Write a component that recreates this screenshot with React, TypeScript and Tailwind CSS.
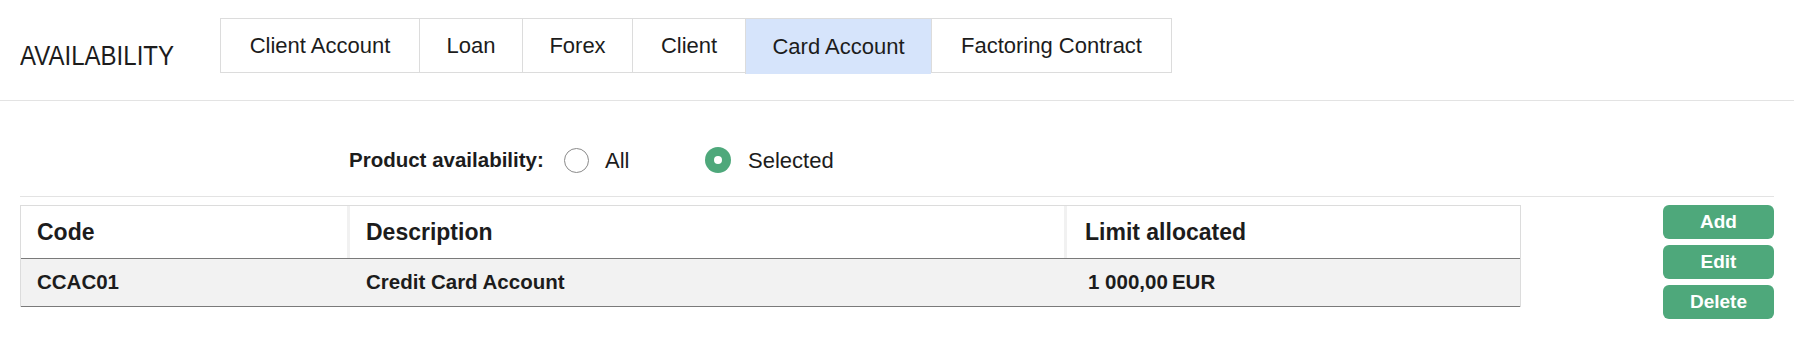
import { useState } from "react";

const tabs = [
  { label: "Client Account", w: "w-[198px]" },
  { label: "Loan", w: "w-[103px]" },
  { label: "Forex", w: "w-[110px]" },
  { label: "Client", w: "w-[113px]" },
  { label: "Card Account", w: "w-[186px]" },
  { label: "Factoring Contract", w: "w-[240px]" },
];

const rows = [
  { code: "CCAC01", description: "Credit Card Account", limit: "1 000,00\u202FEUR" },
];

function Radio({ checked }: { checked: boolean }) {
  if (checked) {
    return (
      <span className="flex h-[26px] w-[26px] items-center justify-center rounded-full bg-[#4ea87b]">
        <span className="h-[8px] w-[8px] rounded-full bg-white" />
      </span>
    );
  }
  return <span className="h-[25px] w-[25px] rounded-full border border-[#8a8a8a] bg-white" />;
}

export default function App() {
  const [activeTab, setActiveTab] = useState("Card Account");
  const [availability, setAvailability] = useState("selected");

  return (
    <div className="h-[337px] w-[1794px] overflow-hidden bg-white font-['Liberation_Sans',Arial,sans-serif] text-[#1c1c1c]">
      {/* top bar */}
      <div className="flex h-[101px] border-b border-[#e3e3e3] pl-[20px] pt-[18px]">
        <div className="mt-[25px] w-[200px]">
          <h1 className="inline-block origin-left scale-x-[0.89] text-[27px] leading-none font-normal">
            AVAILABILITY
          </h1>
        </div>
        <div className="flex h-[55px] border border-[#dcdcdc]">
          {tabs.map((tab, i) => (
            <button
              key={tab.label}
              onClick={() => setActiveTab(tab.label)}
              className={`${tab.w} flex items-center justify-center text-[22px] ${
                i > 0 ? "border-l border-[#dcdcdc]" : ""
              } ${activeTab === tab.label ? "-mb-[2px] bg-[#d6e4fb]" : "bg-white"}`}
            >
              {tab.label}
            </button>
          ))}
        </div>
      </div>

      <div className="px-[20px]">
        {/* product availability */}
        <div className="flex border-b border-[#e3e3e3] pb-[23px] pl-[329px] pt-[46px]">
          <div className="flex h-[26px] items-center">
            <span className="w-[215px] text-[20.5px] font-bold">Product availability:</span>
            <label
              className="flex w-[141px] cursor-pointer items-center"
              onClick={() => setAvailability("all")}
            >
              <Radio checked={availability === "all"} />
              <span className="ml-[16px] text-[22px]">All</span>
            </label>
            <label
              className="flex cursor-pointer items-center"
              onClick={() => setAvailability("selected")}
            >
              <Radio checked={availability === "selected"} />
              <span className="ml-[17px] text-[22px]">Selected</span>
            </label>
          </div>
        </div>

        {/* table + actions */}
        <div className="mt-[8px] flex items-start justify-between">
          <div className="w-[1501px] border-x border-t border-[#dcdcdc]">
            <div className="flex h-[53px] border-b border-[#7a7a7a] text-[23px] font-bold">
              <div className="flex w-[329px] items-center border-r-[3px] border-[#f1f1f1] pl-[16px]">Code</div>
              <div className="flex w-[717px] items-center border-r-[3px] border-[#f1f1f1] pl-[16px]">Description</div>
              <div className="flex flex-1 items-center pl-[18px]">Limit allocated</div>
            </div>
            {rows.map((row) => (
              <div
                key={row.code}
                className="flex h-[48px] border-b border-[#7a7a7a] bg-[#f2f2f2] text-[20.5px] font-bold"
              >
                <div className="flex w-[329px] items-center pl-[16px]">{row.code}</div>
                <div className="flex w-[720px] items-center pl-[16px]">{row.description}</div>
                <div className="flex flex-1 items-center pl-[18px]">{row.limit}</div>
              </div>
            ))}
          </div>

          <div className="flex w-[111px] flex-col gap-[6px]">
            {["Add", "Edit", "Delete"].map((label) => (
              <button
                key={label}
                className="flex h-[34px] items-center justify-center rounded-[6px] bg-[#4ea87b] text-[19px] font-bold text-white"
              >
                {label}
              </button>
            ))}
          </div>
        </div>
      </div>
    </div>
  );
}
